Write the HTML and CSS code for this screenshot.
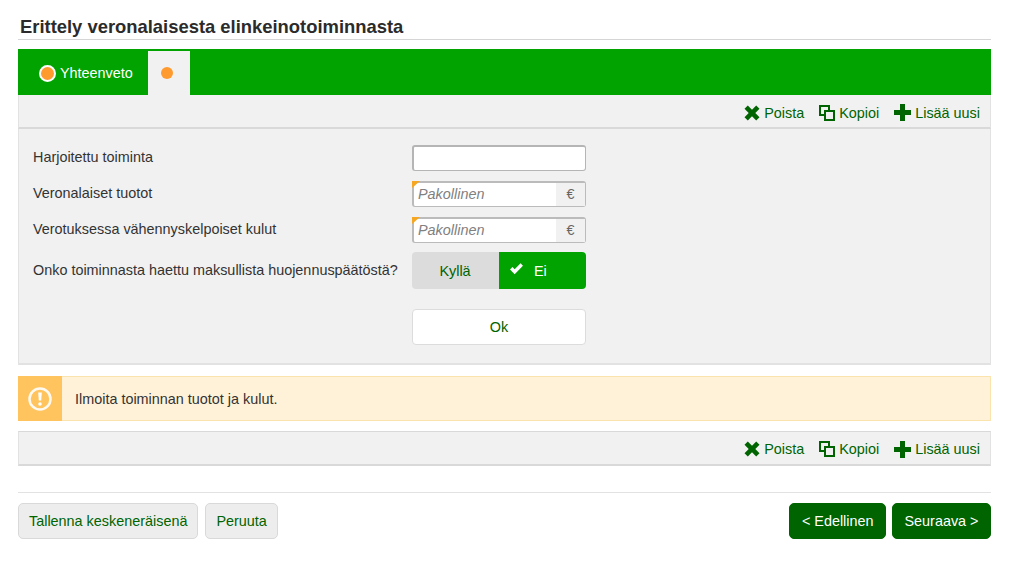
FILE: index.html
```html
<!DOCTYPE html>
<html lang="fi">
<head>
<meta charset="utf-8">
<title>Erittely</title>
<link rel="stylesheet" href="styles.css">
</head>
<body>
<main class="page">
  <h1 class="title">Erittely veronalaisesta elinkeinotoiminnasta</h1>
  <nav class="tabs">
    <a class="tab tab-summary"><span class="dot dot-ring"></span>Yhteenveto</a>
    <a class="tab tab-active"><span class="dot"></span></a>
  </nav>
  <div class="toolbar">
    <a class="action"><svg class="icon" viewBox="0 0 16 16"><path d="M0.500 3.800 3.800.5 8 4.700 12.200.5l3.300 3.300L11.300 8l4.200 4.200-3.300 3.300L8 11.300l-4.200 4.200-3.300-3.300L4.700 8z"/></svg>Poista</a>
    <a class="action"><svg class="icon" viewBox="0 0 16 16"><path fill-rule="evenodd" d="M0 0h11v5h5v11H5v-5H0zM2 2v7h3V5h4V2zM7 7v7h7V7z"/></svg>Kopioi</a>
    <a class="action"><svg class="icon icon-plus" viewBox="0 0 17 17"><path d="M6 0h5v6h6v5h-6v6H6v-6H0V6h6z"/></svg>Lisää uusi</a>
  </div>
  <form class="form">
    <div class="row">
      <label class="label">Harjoitettu toiminta</label>
      <div class="field field-plain"></div>
    </div>
    <div class="row">
      <label class="label">Veronalaiset tuotot</label>
      <div class="field field-req"><span class="placeholder">Pakollinen</span><span class="unit">€</span></div>
    </div>
    <div class="row">
      <label class="label">Verotuksessa vähennyskelpoiset kulut</label>
      <div class="field field-req"><span class="placeholder">Pakollinen</span><span class="unit">€</span></div>
    </div>
    <div class="row row-toggle">
      <label class="label">Onko toiminnasta haettu maksullista huojennuspäätöstä?</label>
      <div class="toggle">
        <span class="opt opt-off">Kyllä</span>
        <span class="opt opt-on"><svg class="check" viewBox="0 0 16 13"><path d="M1 7l2.600-2.600L6 6.800 12.400.4 15 3 6 12.300z"/></svg>Ei</span>
      </div>
    </div>
    <div class="row row-ok">
      <span class="label"></span>
      <button class="ok" type="button">Ok</button>
    </div>
  </form>
  <div class="notice">
    <span class="notice-icon"><svg viewBox="0 0 24 24" class="notice-svg"><circle cx="12" cy="12" r="10.500" fill="none" stroke="#fff" stroke-width="2.500" opacity=".9"/><path d="M10.200 5.500h3.600l-.6 8h-2.400z" fill="#fff"/><circle cx="12" cy="17" r="1.800" fill="#fff"/></svg></span>
    <span class="notice-text">Ilmoita toiminnan tuotot ja kulut.</span>
  </div>
  <div class="toolbar toolbar-bottom">
    <a class="action"><svg class="icon" viewBox="0 0 16 16"><path d="M0.500 3.800 3.800.5 8 4.700 12.200.5l3.300 3.300L11.300 8l4.200 4.200-3.300 3.300L8 11.300l-4.200 4.200-3.300-3.300L4.700 8z"/></svg>Poista</a>
    <a class="action"><svg class="icon" viewBox="0 0 16 16"><path fill-rule="evenodd" d="M0 0h11v5h5v11H5v-5H0zM2 2v7h3V5h4V2zM7 7v7h7V7z"/></svg>Kopioi</a>
    <a class="action"><svg class="icon icon-plus" viewBox="0 0 17 17"><path d="M6 0h5v6h6v5h-6v6H6v-6H0V6h6z"/></svg>Lisää uusi</a>
  </div>
  <footer class="footer">
    <button class="btn btn-light" type="button">Tallenna keskeneräisenä</button>
    <button class="btn btn-light" type="button">Peruuta</button>
    <span class="spacer"></span>
    <button class="btn btn-dark" type="button">&lt; Edellinen</button>
    <button class="btn btn-dark" type="button">Seuraava &gt;</button>
  </footer>
</main>
</body>
</html>
```
FILE: styles.css
```css
* { box-sizing: border-box; }
html, body { margin: 0; padding: 0; background: #fff; }
body { font-family: "Liberation Sans", Arial, sans-serif; font-size: 14.400px; color: #333; }
.page { width: 973px; margin-left: 18px; height: 570px; overflow: hidden; }
.title { margin: 17px 0 9px; height: 23px; padding: 0 0 0 2px; font-size: 18.400px; line-height: 20px; font-weight: bold; color: #2b2b2b; border-bottom: 1px solid #d5d5d5; }
.tabs { height: 46px; background: #00a300; display: flex; padding-top: 2px; }
.tab { display: flex; align-items: center; color: #fff; }
.tab-summary { width: 130px; padding-left: 21px; }
.tab-active { width: 42px; background: #f1f1f1; justify-content: center; padding-right: 4px; padding-bottom: 0; }
.dot { width: 12px; height: 12px; border-radius: 50%; background: #ff9a2e; display: block; }
.dot-ring { width: 17px; height: 17px; border: 2px solid #fff; margin-right: 4px; }
.toolbar { height: 34px; background: #f1f1f1; border-bottom: 2px solid #d9d9d9; border-left: 1px solid #e2e2e2; border-right: 1px solid #e2e2e2; display: flex; justify-content: flex-end; align-items: center; padding: 3px 10px 0 0; gap: 15px; }
.toolbar-bottom { height: 35px; margin-top: 10px; border-top: 1px solid #d9d9d9; padding-top: 2px; }
.action { display: flex; align-items: center; color: #006400; }
.icon { width: 16px; height: 16px; fill: #006400; margin-right: 4px; }
.icon-plus { width: 17px; height: 17px; }
.form { height: 236px; background: #f1f1f1; border: 1px solid #e2e2e2; border-top: 0; border-bottom: 2px solid #e2e2e2; padding: 15px 0 0 14px; }
.row { display: flex; align-items: center; height: 27px; margin-bottom: 9px; }
.label { width: 379px; flex: none; padding-bottom: 2px; }
.field { width: 174px; height: 26px; background: #fff; border: 1px solid #bbb; border-top-width: 2px; border-left-width: 2px; border-radius: 3px; display: flex; position: relative; }
.field-plain { border-color: #b5b5b5; }
.field-req::before { content: ""; position: absolute; top: -2px; left: -2px; border-style: solid; border-width: 7px 8px 0 0; border-color: #f5a623 transparent transparent transparent; }
.placeholder { flex: 1; padding-left: 4px; font-style: italic; color: #808080; line-height: 23px; }
.unit { width: 29px; background: #f1f1f1; color: #666; text-align: center; line-height: 23px; }
.row-toggle { height: 37px; margin-bottom: 20px; }
.toggle { width: 174px; height: 37px; display: flex; border-radius: 4px; overflow: hidden; }
.opt { display: flex; align-items: center; width: 87px; }
.opt-off { background: #dcdcdc; color: #006400; justify-content: center; padding-right: 1px; }
.opt-on { background: #00a300; color: #fff; padding-left: 10px; }
.check { width: 15px; height: 12px; fill: #fff; margin-right: 10px; margin-top: -3px; }
.row-ok { height: 36px; margin-bottom: 0; }
.ok { width: 174px; height: 36px; background: #fff; border: 1px solid #dcdcdc; border-radius: 4px; color: #006400; font: inherit; }
.notice { height: 45px; margin-top: 11px; background: #fff2d9; border: 1px solid #fbe3ae; display: flex; align-items: center; }
.notice-icon { width: 44px; height: 45px; margin: -1px 0 -1px -1px; background: #ffc45e; flex: none; display: flex; align-items: center; justify-content: center; }
.notice-svg { width: 24px; height: 24px; }
.notice-text { margin-left: 13px; color: #333; }
.footer { display: flex; margin-top: 26px; border-top: 1px solid #e2e2e2; padding-top: 10px; gap: 6px; }
.spacer { flex: 1; }
.btn { height: 36px; border-radius: 5px; font: inherit; }
.btn-light { padding: 0 10px; background: #ededed; border: 1px solid #d9d9d9; color: #006400; }
.btn-light + .btn-light { margin-left: 1px; }
.btn-dark { padding: 0 11.500px; background: #006400; border: 1px solid #006400; color: #fff; }
```
